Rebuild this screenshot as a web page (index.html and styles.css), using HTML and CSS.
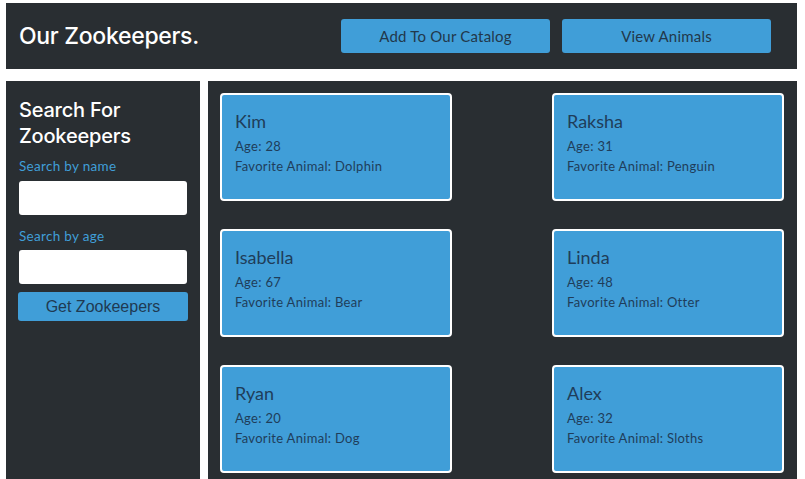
FILE: index.html
```html
<!DOCTYPE html>
<html lang="en">
<head>
<meta charset="utf-8">
<title>Our Zookeepers</title>
<link rel="stylesheet" href="styles.css">
</head>
<body>
<div class="page">
  <header class="topbar">
    <h1 class="brand">Our Zookeepers.</h1>
    <nav class="nav">
      <a class="nav-btn" href="#">Add To Our Catalog</a>
      <a class="nav-btn" href="#">View Animals</a>
    </nav>
  </header>
  <div class="content">
    <aside class="sidebar">
      <h2 class="side-title">Search For Zookeepers</h2>
      <form class="search">
        <label class="field-label" for="name">Search by name</label>
        <input class="field" id="name" type="text">
        <label class="field-label field-label-2" for="age">Search by age</label>
        <input class="field field-2" id="age" type="text">
        <button class="submit" type="button">Get Zookeepers</button>
      </form>
    </aside>
    <main class="cards">
      <div class="card"><h3 class="card-name">Kim</h3><p class="card-line">Age: 28</p><p class="card-line">Favorite Animal: Dolphin</p></div>
      <div class="card"><h3 class="card-name">Raksha</h3><p class="card-line">Age: 31</p><p class="card-line">Favorite Animal: Penguin</p></div>
      <div class="card"><h3 class="card-name">Isabella</h3><p class="card-line">Age: 67</p><p class="card-line">Favorite Animal: Bear</p></div>
      <div class="card"><h3 class="card-name">Linda</h3><p class="card-line">Age: 48</p><p class="card-line">Favorite Animal: Otter</p></div>
      <div class="card"><h3 class="card-name">Ryan</h3><p class="card-line">Age: 20</p><p class="card-line">Favorite Animal: Dog</p></div>
      <div class="card"><h3 class="card-name">Alex</h3><p class="card-line">Age: 32</p><p class="card-line">Favorite Animal: Sloths</p></div>
    </main>
  </div>
</div>
</body>
</html>
```

FILE: styles.css
```css
* { box-sizing: border-box; }
html, body { margin: 0; padding: 0; background: #ffffff; }
body { font-family: "Lato", "Noto Sans", sans-serif; }

.page { padding: 3px 8px 0 6px; }

.topbar {
  height: 66px;
  background: #292e32;
  display: flex;
  align-items: center;
  justify-content: space-between;
  padding: 0 26px 0 13px;
}
.brand {
  margin: 0;
  font-family: "Inter", "Roboto", sans-serif;
  font-weight: 500;
  font-size: 23px;
  color: #ffffff;
  letter-spacing: -0.3px;
}
.nav { display: flex; gap: 12px; }
.nav-btn {
  width: 209px;
  height: 34px;
  display: flex;
  align-items: center;
  justify-content: center;
  background: #409ed8;
  border-radius: 3px;
  color: #22384b;
  text-decoration: none;
  font-size: 15px;
  letter-spacing: 0.2px;
}

.content {
  margin-top: 12px;
  display: flex;
  gap: 8px;
  height: 410px;
}
.sidebar {
  width: 194px;
  background: #292e32;
  padding: 16px 13px 0 13px;
}
.side-title {
  margin: 0;
  font-family: "Inter", "Roboto", sans-serif;
  font-weight: 500;
  font-size: 20px;
  line-height: 26px;
  color: #ffffff;
  letter-spacing: -0.2px;
}
.search { display: flex; flex-direction: column; }
.field-label {
  margin-top: 8px;
  font-size: 13.5px;
  line-height: 18px;
  color: #409ed8;
  letter-spacing: 0.3px;
}
.field-label-2 { margin-top: 12px; }
.field {
  margin-top: 6px;
  height: 34px;
  border: none;
  border-radius: 3px;
  background: #ffffff;
}
.field-2 { margin-top: 5px; }
.submit {
  margin: 8px -1px 0 -1px;
  height: 29px;
  border: none;
  border-radius: 3px;
  background: #409ed8;
  color: #1f3a52;
  font-family: "Liberation Sans", Arial, sans-serif;
  font-size: 16px;
}

.cards {
  flex: 1;
  background: #292e32;
  padding: 12px 13px 0 12px;
  display: grid;
  grid-template-columns: 232px 232px;
  grid-auto-rows: 108px;
  justify-content: space-between;
  align-content: start;
  row-gap: 28px;
}
.card {
  background: #409ed8;
  border: 2px solid #ffffff;
  border-radius: 4px;
  padding: 15px 13px 0 13px;
  color: #1f3d5a;
}
.card-name {
  margin: 0 0 4px 0;
  font-weight: 400;
  font-size: 18px;
  line-height: 22px;
}
.card-line {
  margin: 0;
  font-size: 13px;
  line-height: 20px;
  letter-spacing: 0.3px;
}
```
